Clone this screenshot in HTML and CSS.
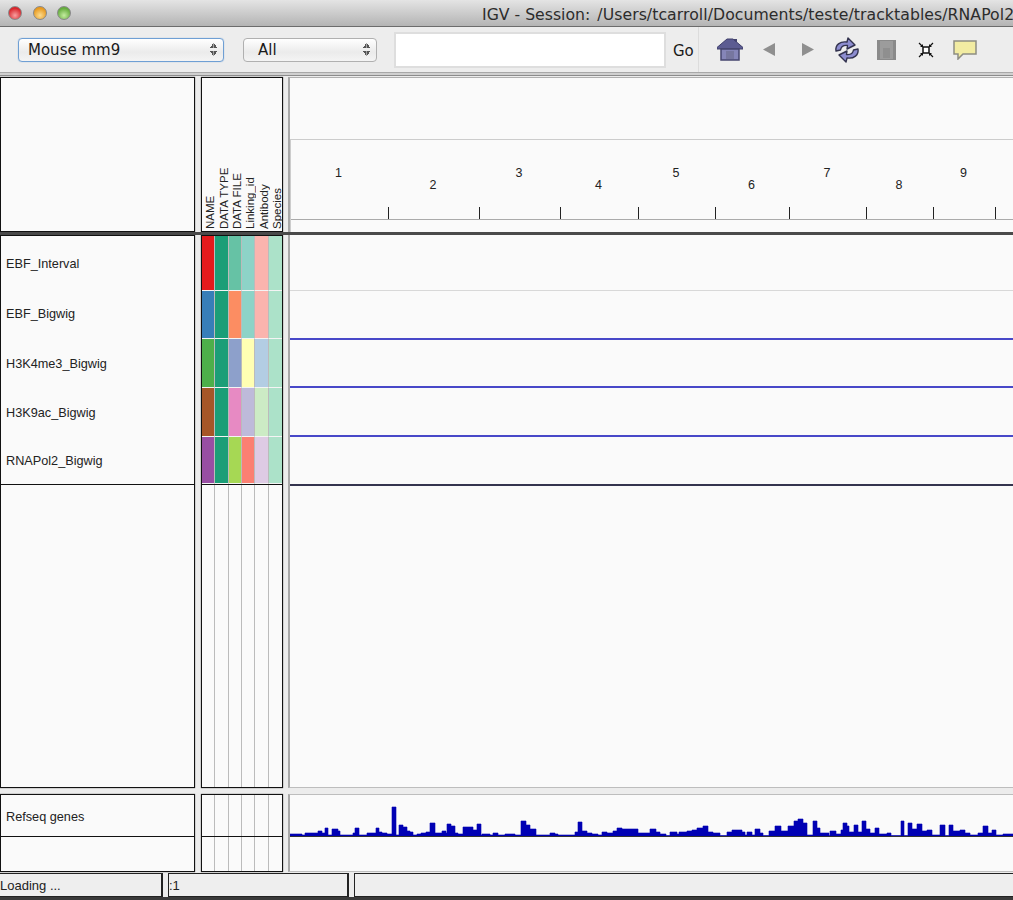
FILE: index.html
```html
<!DOCTYPE html>
<html lang="en">
<head>
    <meta charset="UTF-8">
    <title>IGV - Session</title>
    <link rel="stylesheet" href="styles.css">
</head>
<body>

<div class="app">

    <!-- Window title -->
    <div class="titlebar">
        <div class="lights">
            <span class="light red"></span>
            <span class="light amber"></span>
            <span class="light green"></span>
        </div>
        <div class="title">IGV - Session:<span class="title-path">/Users/tcarroll/Documents/teste/tracktables/RNAPol2</span></div>
    </div>

    <!-- Toolbar -->
    <div class="toolbar">
        <div class="select genome-select">
            <span>Mouse mm9</span>
            <span class="arrows"></span>
        </div>
        <div class="select chrom-select">
            <span>All</span>
            <span class="arrows"></span>
        </div>
        <div class="search-box"></div>
        <span class="go">Go</span>
        <div class="tools">
            <svg class="tool home" width="26" height="23" viewBox="0 0 26 23">
                <path d="M17 1h3v3h-3z" fill="#45456f"/>
                <path d="M0 9.500 10 1h6l10 8.500v1.500H0z" fill="#5c5c92" stroke="#3f3f6b"/>
                <path d="M4 11h18v11H4z" fill="#8585b8" stroke="#45456f" stroke-width="1.500"/>
                <path d="M9 13h8v8H9z" fill="#76769f"/>
            </svg>
            <svg class="tool back" width="12" height="13" viewBox="0 0 12 13">
                <path d="M12 0v13L0 6.500z" fill="#8f8f8f"/>
            </svg>
            <svg class="tool forward" width="12" height="13" viewBox="0 0 12 13">
                <path d="M0 0v13l12-6.500z" fill="#8f8f8f"/>
            </svg>
            <svg class="tool refresh" width="26" height="26" viewBox="0 0 26 26">
                <path d="M2 14C1 8 6 4 13 5l1-4 7 7-8 4 .5-3.500C9 8 7 10 6.500 13z" fill="#8d8dd0" stroke="#33334f" stroke-width="1.400" stroke-linejoin="round"/>
                <path d="M24 12c1 6-4 10-11 9l-1 4-7-7 8-4-.5 3.500c4.500.500 6.500-1.500 7-4.500z" fill="#8d8dd0" stroke="#33334f" stroke-width="1.400" stroke-linejoin="round"/>
            </svg>
            <svg class="tool region" width="19" height="20" viewBox="0 0 19 20">
                <path d="M0 0h19v20H0z" fill="#8a8a8a"/>
                <path d="M3 1h13v18H3z" fill="#9c9c9c"/>
                <path d="M6 8h7v10H6z" fill="#8f8f8f"/>
            </svg>
            <svg class="tool collapse" width="16" height="16" viewBox="0 0 16 16">
                <path d="M5 5h6v6H5z" fill="#fff" stroke="#111" stroke-width="1.500"/>
                <path d="M1 1l3 3M15 1l-3 3M1 15l3-3M15 15l-3-3" stroke="#111" stroke-width="1.200"/>
                <path d="M5 5V2L2 5zM11 5V2l3 3zM5 11v3l-3-3zM11 11v3l3-3z" fill="#111"/>
            </svg>
            <svg class="tool comment" width="24" height="20" viewBox="0 0 24 20">
                <path d="M1 1h22v13H10l-5 5v-5H1z" fill="#f2eca2" stroke="#8d8d82" stroke-width="1.500"/>
            </svg>
        </div>
    </div>

    <!-- Header panels -->
    <div class="panel-row header-row">
        <div class="panel"></div>
        <div class="panel attr-header">
            <span>NAME</span>
            <span>DATA TYPE</span>
            <span>DATA FILE</span>
            <span>Linking_id</span>
            <span>Antibody</span>
            <span>Species</span>
        </div>
        <div class="track-pane ruler-pane">
            <div class="ruler-box">
                <div class="ruler">
                    <div class="chrom c1"><span>1</span></div>
                    <div class="chrom c2 low"><span>2</span></div>
                    <div class="chrom c3"><span>3</span></div>
                    <div class="chrom c4 low"><span>4</span></div>
                    <div class="chrom c5"><span>5</span></div>
                    <div class="chrom c6 low"><span>6</span></div>
                    <div class="chrom c7"><span>7</span></div>
                    <div class="chrom c8 low"><span>8</span></div>
                    <div class="chrom c9"><span>9</span></div>
                </div>
            </div>
        </div>
    </div>

    <!-- Data panels -->
    <div class="panel-row data-row">
        <div class="panel names">
            <div class="row r1">EBF_Interval</div>
            <div class="row r2">EBF_Bigwig</div>
            <div class="row r3">H3K4me3_Bigwig</div>
            <div class="row r4">H3K9ac_Bigwig</div>
            <div class="row r5 last">RNAPol2_Bigwig</div>
        </div>
        <div class="panel attrs">
            <div class="attr-row r1">
                <i style="background:#e41a1c"></i><i style="background:#1b9e77"></i><i style="background:#66c2a5"></i><i style="background:#8dd3c7"></i><i style="background:#fbb4ae"></i><i style="background:#ace2c9"></i>
            </div>
            <div class="attr-row r2">
                <i style="background:#377eb8"></i><i style="background:#1b9e77"></i><i style="background:#fc8d62"></i><i style="background:#8dd3c7"></i><i style="background:#fbb4ae"></i><i style="background:#ace2c9"></i>
            </div>
            <div class="attr-row r3">
                <i style="background:#4daf4a"></i><i style="background:#1b9e77"></i><i style="background:#8da0cb"></i><i style="background:#ffffb3"></i><i style="background:#b3cde3"></i><i style="background:#ace2c9"></i>
            </div>
            <div class="attr-row r4">
                <i style="background:#a65628"></i><i style="background:#1b9e77"></i><i style="background:#e78ac3"></i><i style="background:#bebada"></i><i style="background:#ccebc5"></i><i style="background:#ace2c9"></i>
            </div>
            <div class="attr-row r5 last">
                <i style="background:#984ea3"></i><i style="background:#1b9e77"></i><i style="background:#a6d854"></i><i style="background:#fb8072"></i><i style="background:#decbe4"></i><i style="background:#ace2c9"></i>
            </div>
            <div class="attr-row filler"><i></i><i></i><i></i><i></i><i></i><i></i></div>
        </div>
        <div class="track-pane data-pane">
            <div class="track t1"></div>
            <div class="track t2"></div>
            <div class="track t3"></div>
            <div class="track t4"></div>
            <div class="track t5"></div>
        </div>
    </div>

    <!-- Feature panels -->
    <div class="panel-row feature-row">
        <div class="panel names">
            <div class="row refseq">Refseq genes</div>
        </div>
        <div class="panel attrs">
            <div class="attr-row refseq"><i></i><i></i><i></i><i></i><i></i><i></i></div>
            <div class="attr-row filler"><i></i><i></i><i></i><i></i><i></i><i></i></div>
        </div>
        <div class="track-pane feature-pane">
            <div class="track refseq">
                <svg class="density" width="723" height="41" viewBox="290 795 723 41" preserveAspectRatio="none">
                    <path fill="#0000b4" stroke="#0000b4" stroke-width="0.600" d="M290 837V834H302V835H305V833H318V831H322V833H325V828H328V835H332V829H338V831H340V835H353V833H355V828H359V835H367V833H376V828H379V832H382V833H387V834H392V807H396V835H399V825H403V827H407V831H410V832H413V835H417V834H421V833H426V832H430V823H435V833H442V831H446V833H447V824H451V826H455V833H458V834H463V827H473V830H477V824H481V835H482V834H490V835H493V833H498V835H505V834H515V835H521V821H526V825H530V829H536V835H550V833H555V834H558V835H575V832H578V822H582V831H587V833H592V834H598V835H602V832H607V833H613V831H617V828H622V829H638V833H640V833H650V829H656V832H660V834H666V835.500H670V832H677V834H679V832H687V831H692V830H697V828H703V826H708V832H713V833H720V835.500H727V832H732V830H742V832H745V835H747V832H752V835H755V829H760V833H763V835.500H769V831H775V826H781V831H788V826H794V821H798V819H803V823H807V835H813V821H817V828H820V833H829V835.500H830V831H836V834H841V830H843V823H847V826H849V832H854V825H858V832H862V821H866V829H870V833H875V828H879V834H887V833H891V835.500H901V821H904V835.500H908V823H912V829H917V824H922V831H927V830H932V835H940V825H945V835.500H949V825H953V831H960V830H965V833H970V835H978V833H983V826H988V833H992V830H996V835H1003V834H1013V837Z"/>
                </svg>
            </div>
        </div>
    </div>

    <!-- Status bar -->
    <div class="statusbar">
        <div class="status-box status-msg">Loading ...</div>
        <div class="status-box status-pos">:1</div>
        <div class="status-box status-rest"></div>
    </div>
    <div class="screen-edge"></div>
</div>

</body>
</html>
```

FILE: styles.css
```css
html, body {
    margin: 0;
    padding: 0;
    height: 100%;
    overflow: hidden;
}

body {
    font-family: "Liberation Sans", Arial, sans-serif;
    background: #ececec;
    color: #222;
}

.app {
    width: 1013px;
    height: 900px;
    display: flex;
    flex-direction: column;
    overflow: hidden;
}

/* title bar */

.titlebar {
    height: 26px;
    flex: none;
    display: flex;
    align-items: center;
    background: linear-gradient(#e4e4e4, #b4b4b4);
    border-bottom: 1px solid #6c6c6c;
    overflow: hidden;
}

.lights {
    display: flex;
    gap: 10.500px;
    padding-left: 8px;
    width: 474px;
    flex: none;
}

.light {
    box-sizing: border-box;
    width: 14px;
    height: 14px;
    border-radius: 50%;
    border: 1px solid #888;
}

.light.red { background: radial-gradient(circle at 50% 70%, #f8a0a0, #d8242a 70%); }
.light.amber { background: radial-gradient(circle at 50% 70%, #fbdc90, #e8991e 70%); }
.light.green { background: radial-gradient(circle at 50% 70%, #c4eca0, #64ac3c 70%); }

.title {
    font-family: "DejaVu Sans", sans-serif;
    font-size: 15.700px;
    color: #2c2c2c;
    white-space: nowrap;
    padding-top: 2px;
}

.title-path {
    margin-left: 7px;
    letter-spacing: 0.060px;
}

/* toolbar */

.toolbar {
    height: 46px;
    flex: none;
    box-sizing: border-box;
    display: flex;
    align-items: center;
    background: #ededed;
    border-bottom: 1px solid #a8a8a8;
    box-shadow: 0 2px 0 #d0d0d0, 0 3px 0 #8c8c8c;
    margin-bottom: 4px;
    padding-left: 18px;
}

.select {
    box-sizing: border-box;
    height: 24px;
    display: flex;
    align-items: center;
    justify-content: space-between;
    border-radius: 4px;
    background: linear-gradient(#ffffff, #ebebeb 60%, #f4f4f4);
    font-family: "DejaVu Sans", sans-serif;
    font-size: 15px;
    color: #1a1a1a;
}

.genome-select {
    width: 206px;
    border: 1px solid #6f9fd4;
    box-shadow: 0 0 1px #6f9fd4;
    padding: 0 6px 0 9px;
    margin-right: 19px;
}

.chrom-select {
    width: 134px;
    border: 1px solid #b0b0b0;
    padding: 0 6px 0 14px;
    margin-right: 17px;
}

.arrows {
    width: 7px;
    height: 13px;
    background:
        linear-gradient(to top right, transparent 50%, #555 50%) left bottom / 3.500px 5px no-repeat,
        linear-gradient(to top left, transparent 50%, #555 50%) right bottom / 3.500px 5px no-repeat,
        linear-gradient(to bottom right, transparent 50%, #555 50%) left top / 3.500px 5px no-repeat,
        linear-gradient(to bottom left, transparent 50%, #555 50%) right top / 3.500px 5px no-repeat;
}

.search-box {
    box-sizing: border-box;
    width: 272px;
    height: 36px;
    background: #fff;
    border: 2px solid #dedede;
    margin-right: 7px;
}

.go {
    align-self: stretch;
    display: flex;
    align-items: center;
    font-family: "DejaVu Sans", sans-serif;
    font-size: 15px;
    color: #1a1a1a;
    padding: 3px 4px 0 0;
    border-right: 1px solid #dcdcdc;
}

.tools {
    display: flex;
    align-items: center;
    margin-left: 18px;
}

.tool { display: block; flex: none; }
.tool.back { margin-left: 20px; }
.tool.forward { margin-left: 27px; }
.tool.refresh { margin-left: 20px; }
.tool.region { margin-left: 17px; }
.tool.collapse { margin-left: 22px; }
.tool.comment { margin-left: 19px; }

/* panels */

.panel-row {
    display: grid;
    grid-template-columns: 195px 82px 1fr;
    column-gap: 6px;
    flex: none;
}

.header-row {
    height: 155px;
    border-bottom: 3px solid #4a4a4a;
}

.data-row {
    height: 553px;
    margin-bottom: 6px;
}

.feature-row {
    height: 78px;
    margin-bottom: 1px;
}

.panel {
    box-sizing: border-box;
    border: 1px solid #111;
    box-shadow: 0 0 1px #444;
    background: #fafafa;
    min-width: 0;
}

.track-pane {
    box-sizing: border-box;
    background: #fafafa;
    border-left: 2px solid #a8a8a8;
    margin-left: -1px;
    min-width: 0;
}

.data-pane { border-bottom: 1px solid #bdbdbd; }

.feature-pane {
    border-top: 1px solid #bdbdbd;
    border-bottom: 1px solid #bdbdbd;
}

.attr-header {
    display: grid;
    grid-template-columns: repeat(6, 13.400px);
    padding: 0 0 2px 2px;
}

.attr-header span {
    writing-mode: vertical-rl;
    transform: rotate(180deg);
    font-size: 11.500px;
    line-height: 13px;
    white-space: nowrap;
    justify-self: center;
    color: #222;
}

.ruler-pane {
    border-top: 1px solid #b0b0b0;
    padding-top: 61px;
}

.ruler-box {
    height: 93px;
    box-sizing: border-box;
    border-top: 1px solid #ccc;
    border-left: 1px solid #ccc;
}

.ruler {
    height: 80px;
    box-sizing: border-box;
    display: flex;
    border-bottom: 1px solid #aaa;
    font-size: 12.500px;
    color: #222;
}

.chrom {
    box-sizing: border-box;
    flex: none;
    position: relative;
    text-align: center;
    padding: 26px 3px 0 0;
}

.chrom.low { padding-top: 38px; }

.chrom::after {
    content: "";
    position: absolute;
    right: 0;
    bottom: 0;
    width: 1px;
    height: 12px;
    background: #222;
}

.c1 { width: 98px; }
.c2 { width: 91px; }
.c3 { width: 81px; }
.c4 { width: 78px; }
.c5 { width: 77px; }
.c6 { width: 74px; }
.c7 { width: 77px; }
.c8 { width: 67px; }
.c9 { width: 62px; }

/* rows shared by the name and attribute columns */

.r1 { height: 55px; }
.r2 { height: 48px; }
.r3 { height: 49px; }
.r4 { height: 49px; }
.r5 { height: 48px; }

.row {
    box-sizing: border-box;
    display: flex;
    align-items: center;
    padding-left: 5px;
    font-size: 12.700px;
}

.row.r2 { padding-bottom: 2px; }

.row.last, .attr-row.last {
    border-bottom: 1px solid #111;
}

/* tracks */

.track {
    box-sizing: border-box;
    border-bottom: 2px solid #4848c8;
}

.t1 { height: 56px; border-bottom: 1px solid #d8d8d8; }
.t2 { height: 49px; }
.t3 { height: 48px; }
.t4 { height: 49px; }
.t5 { height: 49px; border-bottom-color: #34344e; }

.attr-row {
    box-sizing: border-box;
    display: grid;
    grid-template-columns: repeat(6, 1fr);
}

.attr-row i {
    display: block;
    border-right: 1px solid #bbb;
    border-bottom: 1px solid #f4f4f4;
}

.attr-row i:last-child { border-right: 0; }

.attr-row.filler {
    height: 302px;
}

.attr-row.filler i { border-bottom: 0; }

.row.refseq {
    padding-top: 2px;
}

.row.refseq, .attr-row.refseq {
    height: 42px;
    border-bottom: 1px solid #111;
}

.attr-row.refseq i { border-bottom: 0; }
.feature-row .attr-row.filler { height: 34px; }

.track.refseq {
    height: 42px;
    border-bottom: 1px solid #333;
}

.density { display: block; }

/* status bar */

.statusbar {
    height: 24px;
    flex: none;
    display: flex;
    gap: 5px;
    font-size: 13px;
}

.status-box {
    box-sizing: border-box;
    border: 1px solid #222;
    border-width: 1px 2px 1px 0;
    background: #eeeeee;
    display: flex;
    align-items: center;
}

.status-msg { width: 163px; }
.status-pos { width: 181px; border-left-width: 1px; }
.status-rest { flex: 1; border-left-width: 1px; border-right: 0; }

.screen-edge {
    flex: 1;
    background: #3a3a3a;
}
```
